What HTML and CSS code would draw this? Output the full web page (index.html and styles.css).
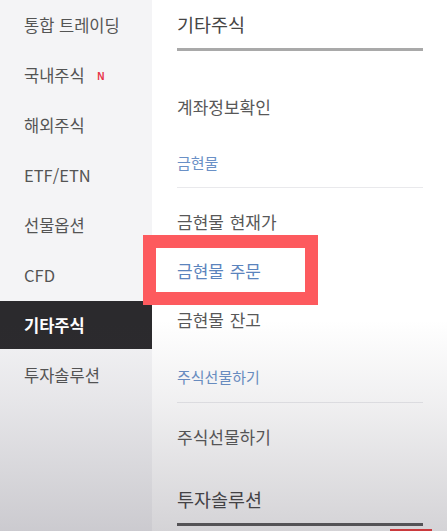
FILE: index.html
```html
<!DOCTYPE html>
<html lang="ko">
<head>
    <meta charset="UTF-8">
    <meta name="viewport" content="width=device-width, initial-scale=1.0">
    <title>기타주식</title>
    <link rel="stylesheet" href="styles.css">
</head>
<body>

<div class="page">
    <ul class="side-menu">
        <li>통합 트레이딩</li>
        <li>국내주식 <span class="badge">N</span></li>
        <li>해외주식</li>
        <li>ETF/ETN</li>
        <li>선물옵션</li>
        <li>CFD</li>
        <li class="active">기타주식</li>
        <li>투자솔루션</li>
    </ul>

    <div class="sub-menu">
        <div class="sub-title">기타주식</div>
        <div class="sub-item first">계좌정보확인</div>

        <div class="group-label">금현물</div>
        <div class="group">
            <div class="sub-item">금현물 현재가</div>
            <div class="sub-item blue">금현물 주문</div>
            <div class="sub-item">금현물 잔고</div>
        </div>

        <div class="group-label second">주식선물하기</div>
        <div class="group">
            <div class="sub-item">주식선물하기</div>
        </div>

        <div class="sub-title dark">투자솔루션</div>
    </div>

    <!-- 강조 표시 -->
    <div class="highlight"></div>
    <div class="red-mark"></div>
    <div class="shade"></div>
</div>

</body>
</html>
```

FILE: styles.css
```css
* {
    box-sizing: border-box;
}

body {
    margin: 0;
    font-family: "Noto Sans CJK KR", "Noto Sans", sans-serif;
    background-color: #fff;
    color: #555;
}

.page {
    position: relative;
    display: flex;
    width: 447px;
    height: 531px;
    overflow: hidden;
}

.side-menu {
    list-style: none;
    margin: 0;
    padding: 0;
    width: 152px;
    background-color: #f4f4f6;
    flex-shrink: 0;
}

.side-menu li {
    height: 50px;
    line-height: 50px;
    padding-left: 24px;
    font-size: 16.5px;
    color: #545454;
}

.side-menu li.active {
    background-color: #2b2a2d;
    color: #fff;
    font-weight: bold;
    border-top: 1px solid #f4f4f6;
    border-bottom: 1px solid #f4f4f6;
    line-height: 48px;
}

.badge {
    margin-left: 8px;
    font-family: "Liberation Sans", Arial, sans-serif;
    font-size: 10px;
    font-weight: bold;
    color: #e8334a;
    vertical-align: 2px;
}

.sub-menu {
    flex: 1;
    padding: 0 24px 0 25px;
}

.sub-title {
    line-height: 48px;
    font-size: 18.5px;
    color: #454545;
    border-bottom: 3px solid #a9a9a9;
}

.sub-title.dark {
    margin-top: 14px;
    border-bottom-color: #5a5a5a;
}

.sub-item {
    height: 49px;
    line-height: 49px;
    font-size: 17px;
    color: #585858;
    word-spacing: 1px;
}

.sub-item.first {
    height: 50px;
    line-height: 50px;
    margin-top: 31px;
}

.sub-item.blue {
    color: #5b84bd;
}

.group-label {
    padding: 21px 0 14px;
    line-height: 20px;
    font-size: 15px;
    color: #6a90c6;
    border-bottom: 1px solid #e9e9ec;
}

.group-label.second {
    padding-top: 23px;
    padding-bottom: 15px;
}

.group {
    padding-top: 9px;
}

.highlight {
    position: absolute;
    left: 143px;
    top: 235px;
    width: 175px;
    height: 70px;
    border: 13px solid #fd5a5e;
}

.red-mark {
    position: absolute;
    left: 390px;
    top: 529px;
    width: 42px;
    height: 3px;
    background-color: #f23a3a;
}

.shade {
    position: absolute;
    left: 0;
    right: 0;
    top: 320px;
    bottom: 0;
    pointer-events: none;
    background: linear-gradient(to bottom, rgba(60, 55, 70, 0) 0%, rgba(60, 55, 70, 0.08) 40%, rgba(60, 55, 70, 0.22) 100%);
}
```
